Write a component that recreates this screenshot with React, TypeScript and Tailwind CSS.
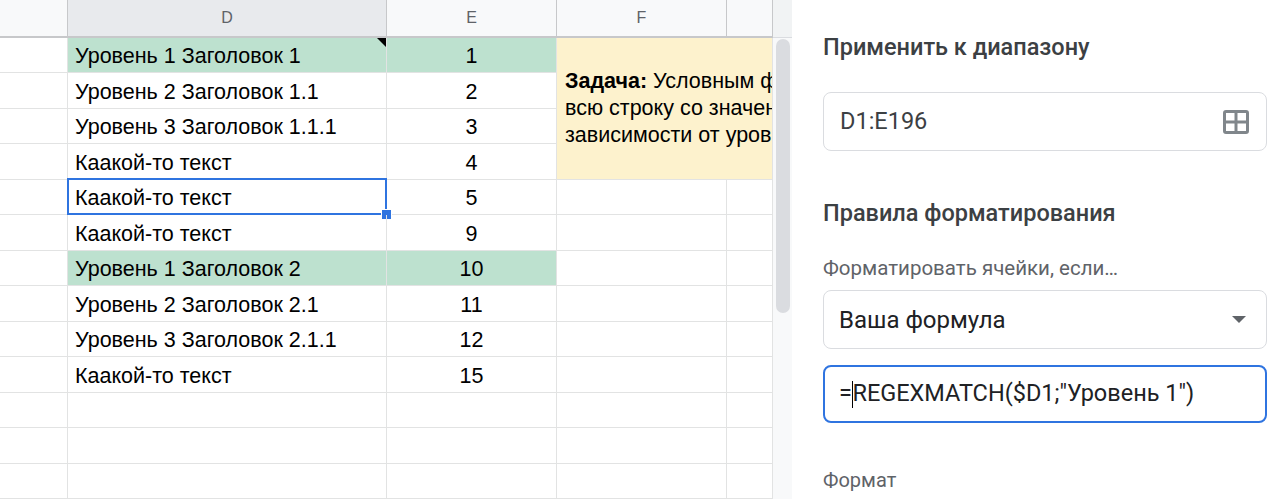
import React from "react";

const rowHeights = [35, 36, 35, 36, 35, 36, 35, 36, 35, 36, 35, 36, 35];

type RowData = { d: string; e: string; green?: boolean };
const rows: RowData[] = [
  { d: "Уровень 1 Заголовок 1", e: "1", green: true },
  { d: "Уровень 2 Заголовок 1.1", e: "2" },
  { d: "Уровень 3 Заголовок 1.1.1", e: "3" },
  { d: "Каакой-то текст", e: "4" },
  { d: "Каакой-то текст", e: "5" },
  { d: "Каакой-то текст", e: "9" },
  { d: "Уровень 1 Заголовок 2", e: "10", green: true },
  { d: "Уровень 2 Заголовок 2.1", e: "11" },
  { d: "Уровень 3 Заголовок 2.1.1", e: "12" },
  { d: "Каакой-то текст", e: "15" },
  { d: "", e: "" },
  { d: "", e: "" },
  { d: "", e: "" },
];

function GridIcon() {
  return (
    <svg width="26" height="24" viewBox="0 0 26 24" fill="none">
      <rect x="1.5" y="1.5" width="23" height="21" rx="1.5" stroke="#80868b" strokeWidth="3" />
      <line x1="13" y1="1" x2="13" y2="23" stroke="#80868b" strokeWidth="3" />
      <line x1="1" y1="12" x2="25" y2="12" stroke="#80868b" strokeWidth="3" />
    </svg>
  );
}

export default function App() {
  const cellBase = "border-r border-b border-[#e2e3e3]";
  return (
    <div className="flex h-[499px] w-[1280px] overflow-hidden bg-white">
      {/* Spreadsheet area */}
      <div className="flex h-full w-[792px] shrink-0">
        <div className="flex h-full w-[773px] flex-col overflow-hidden font-['Liberation_Sans',Arial,sans-serif]">
          {/* Header */}
          <div className="flex h-[38px] shrink-0 border-b-2 border-[#c7c8ca] text-[16px] text-[#5f6368]">
            <div className="w-[68px] shrink-0 border-r border-[#c7c8ca] bg-[#f8f9fa]" />
            <div className="flex w-[319px] shrink-0 items-center justify-center border-r border-[#c7c8ca] bg-[#e8eaed]">D</div>
            <div className="flex w-[170px] shrink-0 items-center justify-center border-r border-[#c7c8ca] bg-[#f8f9fa]">E</div>
            <div className="flex w-[170px] shrink-0 items-center justify-center border-r border-[#c7c8ca] bg-[#f8f9fa]">F</div>
            <div className="w-[46px] shrink-0 border-r border-[#c7c8ca] bg-[#f8f9fa]" />
          </div>
          {/* Body grid */}
          <div
            className="grid grid-cols-[68px_319px_170px_170px_46px] text-[21.5px] text-black"
            style={{ gridTemplateRows: rowHeights.map((h) => `${h}px`).join(" ") }}
          >
            {rows.map((r, i) => (
              <React.Fragment key={i}>
                <div className={cellBase} style={{ gridRow: i + 1, gridColumn: 1 }} />
                <div
                  className={`${cellBase} relative flex items-center pl-[7px] pt-[3px] whitespace-nowrap ${r.green ? "bg-[#bde1cf]" : ""}`}
                  style={{ gridRow: i + 1, gridColumn: 2 }}
                >
                  {r.d}
                  {i === 0 && (
                    <div className="absolute right-0 top-0 h-0 w-0 border-l-[9px] border-t-[9px] border-l-transparent border-t-black" />
                  )}
                  {i === 4 && (
                    <>
                      <div className="absolute -left-[1px] -top-[2px] bottom-[-1px] right-[-1px] border-[2.5px] border-[#2f74e0]" />
                      <div className="absolute -bottom-[6px] -right-[6px] h-[11px] w-[11px] border border-white bg-[#2f74e0]" />
                    </>
                  )}
                </div>
                <div
                  className={`${cellBase} flex items-center justify-center pt-[3px] ${r.green ? "bg-[#bde1cf]" : ""}`}
                  style={{ gridRow: i + 1, gridColumn: 3 }}
                >
                  {r.e}
                </div>
                {i >= 4 && (
                  <>
                    <div className={cellBase} style={{ gridRow: i + 1, gridColumn: 4 }} />
                    <div className={cellBase} style={{ gridRow: i + 1, gridColumn: 5 }} />
                  </>
                )}
              </React.Fragment>
            ))}
            {/* Merged note cell */}
            <div
              className="flex items-center overflow-hidden border-b border-r border-[#e2e3e3] bg-[#fdf2cd] pl-[8px] pb-[1px]"
              style={{ gridRow: "1 / span 4", gridColumn: "4 / span 2" }}
            >
              <div className="whitespace-nowrap text-[21.5px] leading-[27px]">
                <b>Задача:</b> Условным форматированием выделить
                <br />
                всю строку со значением разным цветом в
                <br />
                зависимости от уровня заголовка
              </div>
            </div>
          </div>
        </div>
        {/* Scrollbar */}
        <div className="flex h-full w-[19px] shrink-0 flex-col bg-[#f8f9fa]">
          <div className="h-[38px] shrink-0 border-b border-[#dadce0] bg-[#f1f3f4]" />
          <div className="pl-[3px] pt-[1px]">
            <div className="h-[274px] w-[14px] rounded-full bg-[#dadce0]" />
          </div>
        </div>
      </div>

      {/* Right panel */}
      <div className="flex h-full flex-1 flex-col pl-[31px] pr-[13px] pt-[33px] font-['Roboto',sans-serif]">
        <div className="text-[23.5px] font-medium leading-[28px] text-[#3c4043]">Применить к диапазону</div>
        <div className="mt-[31px] flex h-[59px] items-center justify-between rounded-lg border border-[#dadce0] pl-[16px] pr-[17px]">
          <span className="text-[23.5px] text-[#3c4043]">D1:E196</span>
          <GridIcon />
        </div>
        <div className="mt-[48px] text-[23.5px] font-medium leading-[28px] text-[#3c4043]">Правила форматирования</div>
        <div className="mt-[29px] text-[20.5px] leading-[24px] text-[#5f6368]">Форматировать ячейки, если…</div>
        <div className="mt-[10px] flex h-[59px] items-center justify-between rounded-lg border border-[#dadce0] pl-[15px] pr-[20px]">
          <span className="text-[24px] text-[#202124]">Ваша формула</span>
          <svg width="14" height="7" viewBox="0 0 14 7">
            <path d="M0 0 L14 0 L7 7 Z" fill="#5f6368" />
          </svg>
        </div>
        <div className="mt-[16px] flex h-[58px] items-center rounded-lg border-2 border-[#2f74e0] pl-[14px]">
          <span className="text-[23.5px] text-[#202124]">=</span>
          <span className="-mr-[1px] inline-block h-[27px] w-[1.5px] bg-black" />
          <span className="text-[23.5px] text-[#202124]">REGEXMATCH($D1;"Уровень 1")</span>
        </div>
        <div className="mt-[45px] text-[20px] leading-[24px] text-[#5f6368]">Формат</div>
      </div>
    </div>
  );
}
